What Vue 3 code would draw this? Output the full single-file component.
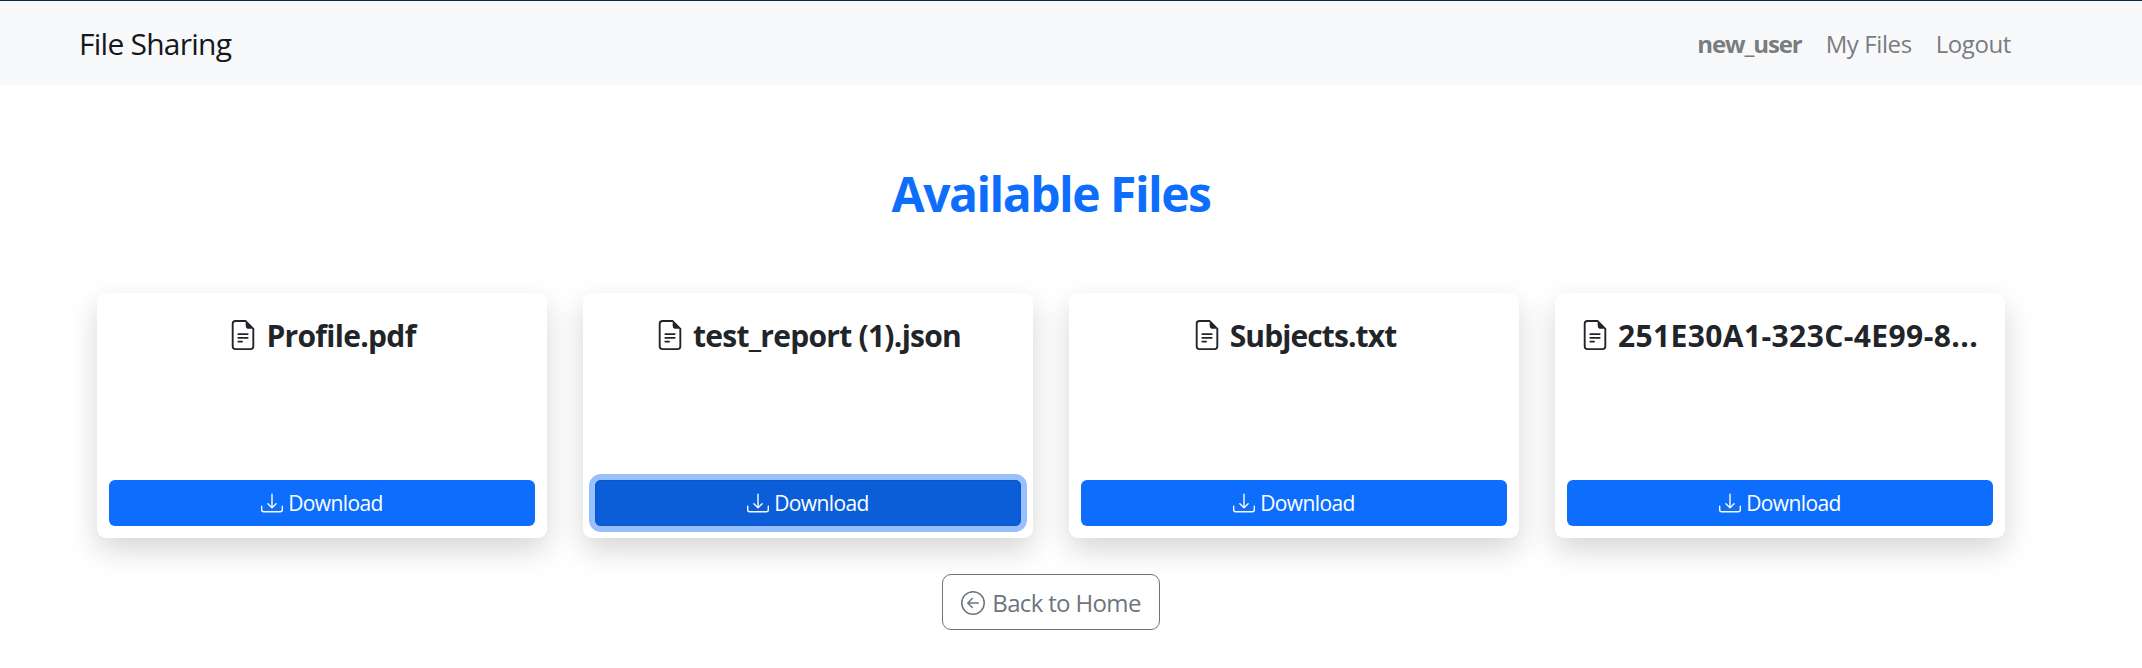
<script setup>
const files = [
  { name: 'Profile.pdf', fit: 'fit-a' },
  { name: 'test_report (1).json', fit: 'fit-b', active: true },
  { name: 'Subjects.txt', fit: 'fit-c' },
  { name: '251E30A1-323C-4E99-8...', fit: 'fit-d' },
]
</script>

<template>
  <div class="page">
    <nav class="navbar">
      <a class="brand">File Sharing</a>
      <div class="links">
        <a class="user">new_user</a>
        <a class="my-files">My Files</a>
        <a class="logout">Logout</a>
      </div>
    </nav>
    <main>
      <h1><span>Available Files</span></h1>
      <div class="grid">
        <article v-for="file in files" :key="file.name" class="card">
          <h2>
            <svg class="file-icon" viewBox="0 0 16 16" fill="currentColor">
              <path d="M5.5 7a.5.5 0 0 0 0 1h5a.5.5 0 0 0 0-1h-5zM5 9.5a.5.5 0 0 1 .5-.5h5a.5.5 0 0 1 0 1h-5a.5.5 0 0 1-.5-.5zm0 2a.5.5 0 0 1 .5-.5h2a.5.5 0 0 1 0 1h-2a.5.5 0 0 1-.5-.5z" />
              <path d="M9.5 0H4a2 2 0 0 0-2 2v12a2 2 0 0 0 2 2h8a2 2 0 0 0 2-2V4.500L9.500 0zm0 1v2A1.500 1.500 0 0 0 11 4.500h2V14a1 1 0 0 1-1 1H4a1 1 0 0 1-1-1V2a1 1 0 0 1 1-1h5.500z" />
              <path d="M9.5.5v2.500A1.500 1.500 0 0 0 11 4.500h2.500z" />
            </svg>
            <span :class="file.fit">{{ file.name }}</span>
          </h2>
          <button class="download" :class="{ active: file.active }">
            <svg class="down-icon" viewBox="0 0 16 16" fill="currentColor">
              <path d="M.5 9.900a.5.5 0 0 1 .5.5v2.500a1 1 0 0 0 1 1h12a1 1 0 0 0 1-1v-2.500a.5.5 0 0 1 1 0v2.500a2 2 0 0 1-2 2H2a2 2 0 0 1-2-2v-2.500a.5.5 0 0 1 .5-.5z" />
              <path d="M7.646 11.854a.5.5 0 0 0 .708 0l3-3a.5.5 0 0 0-.708-.708L8.500 10.293V1.500a.5.5 0 0 0-1 0v8.793L5.354 8.146a.5.5 0 1 0-.708.708l3 3z" />
            </svg>
            <span>Download</span>
          </button>
        </article>
      </div>
      <a class="back">
        <svg class="back-icon" viewBox="0 0 16 16" fill="currentColor">
          <path d="M1 8a7 7 0 1 0 14 0A7 7 0 0 0 1 8zm15 0A8 8 0 1 1 0 8a8 8 0 0 1 16 0zm-4.500-.5a.5.5 0 0 1 0 1H5.707l2.147 2.146a.5.5 0 0 1-.708.708l-3-3a.5.5 0 0 1 0-.708l3-3a.5.5 0 1 1 .708.708L5.707 7.500H11.500z" />
        </svg>
        <span>Back to Home</span>
      </a>
    </main>
  </div>
</template>

<style>
body { margin: 0; background: #fff; }
</style>

<style scoped>
* { box-sizing: border-box; }
.page {
  height: 668px;
  overflow: hidden;
  background: #fff;
  color: #212529;
  font-family: "Open Sans", "Noto Sans", sans-serif;
}
svg { flex: none; display: block; }
span, a { white-space: nowrap; }
.navbar {
  height: 85px;
  border-top: 1px solid #062a4d;
  background: #f8f9fb;
  padding: 2px 131px 0 79px;
  display: flex;
  justify-content: space-between;
  align-items: center;
}
.brand { font-size: 30px; line-height: 45px; letter-spacing: -0.75px; color: #16181b; padding-bottom: 2px; }
.links { display: flex; gap: 24px; font-size: 24px; line-height: 36px; color: #7b7c7e; }
.user { font-weight: 700; letter-spacing: -1.1px; }
.my-files { letter-spacing: -0.4px; }
.logout { letter-spacing: -0.4px; }
main { width: 2102px; display: flex; flex-direction: column; align-items: center; }
h1 {
  margin: 80px 0 70px;
  height: 58px;
  font-size: 48px;
  line-height: 58px;
  font-weight: 700;
  letter-spacing: -1.5px;
  color: #0d6efd;
}
.grid { display: grid; grid-template-columns: repeat(4, 450px); gap: 36px; }
.card {
  height: 245px;
  padding: 24px 12px 12px;
  display: flex;
  flex-direction: column;
  justify-content: space-between;
  background: #fff;
  border-radius: 9px;
  box-shadow: 0 12px 30px rgba(0, 0, 0, 0.165);
}
h2 {
  margin: 0;
  display: flex;
  justify-content: center;
  align-items: center;
  gap: 8px;
  height: 38px;
  font-size: 30px;
  line-height: 38px;
  font-weight: 700;
}
.file-icon { width: 30px; height: 30px; margin-top: -3px; }
.fit-a { letter-spacing: -0.7px; }
.fit-b { letter-spacing: -0.73px; }
.fit-c { letter-spacing: -0.9px; }
.fit-d { letter-spacing: 0.4px; padding-right: 2px; }
.download {
  height: 46px;
  border: 0;
  border-radius: 6px;
  padding: 0;
  display: flex;
  justify-content: center;
  align-items: center;
  gap: 5px;
  background: #0d6efd;
  color: #fff;
  font: 400 21px/32px "Open Sans", "Noto Sans", sans-serif;
  letter-spacing: -0.6px;
}
.download.active {
  background: #0b5ed7;
  box-shadow: inset 0 0 0 1px #0a58ca, 0 0 0 6px #98c0fe;
}
.down-icon { width: 22px; height: 22px; }
.back {
  margin-top: 36px;
  width: 218px;
  height: 56px;
  padding-top: 2px;
  display: flex;
  justify-content: center;
  align-items: center;
  gap: 7px;
  border: 1px solid #6c757d;
  border-radius: 9px;
  color: #6c757d;
  font-size: 24px;
  line-height: 36px;
  letter-spacing: -0.65px;
}
.back-icon { width: 24px; height: 24px; margin-top: -1px; }
</style>
